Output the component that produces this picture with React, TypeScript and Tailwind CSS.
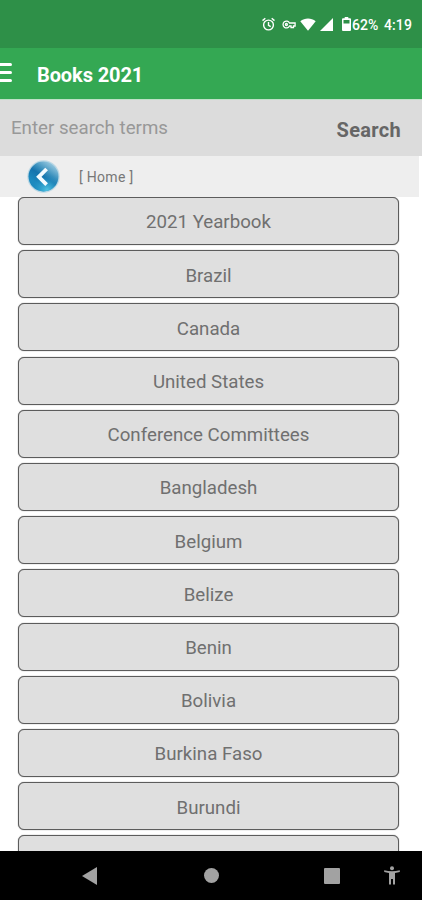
import type { ReactNode } from "react";

const entries = [
  "2021 Yearbook",
  "Brazil",
  "Canada",
  "United States",
  "Conference Committees",
  "Bangladesh",
  "Belgium",
  "Belize",
  "Benin",
  "Bolivia",
  "Burkina Faso",
  "Burundi",
  "",
];

function StatusBar() {
  return (
    <div className="flex h-12 shrink-0 items-center bg-[#2e9048] pl-[262px] text-white">
      <svg className="h-[15px] w-[13px] shrink-0" viewBox="0 0 13 15" fill="none" stroke="currentColor" strokeWidth="1.4">
        <circle cx="6.5" cy="8" r="4.9" />
        <path d="M6.5 5v3.3l2.2 1.3M.5 3.6l2.8-2.4M12.5 3.6L9.7 1.2" />
      </svg>
      <svg className="ml-[7px] h-[9px] w-[14px] shrink-0" viewBox="0 0 14 9" fill="none" stroke="currentColor" strokeWidth="1.3">
        <path d="M7.5 3A3.4 3.4 0 1 0 7.5 6H9v1.5h2.5V6h1.6V3z" />
        <circle cx="4.4" cy="4.5" r="1" />
      </svg>
      <svg className="ml-[4px] h-[13px] w-[16px] shrink-0" viewBox="0 0 16 13" fill="currentColor">
        <path d="M.3 3.2C4.8-.5 11.2-.5 15.7 3.2L8 12.8z" />
      </svg>
      <svg className="ml-[4px] h-[13px] w-[13px] shrink-0" viewBox="0 0 13 13" fill="currentColor">
        <path d="M0 13L13 0v13z" />
      </svg>
      <svg className="ml-[9px] h-[14px] w-[9px] shrink-0" viewBox="0 0 9 14" fill="currentColor">
        <path fillRule="evenodd" d="M2.7 0h3.6v1.2H8q1 0 1 1V13q0 1-1 1H1q-1 0-1-1V2.2q0-1 1-1h1.7zM1.5 3v3.5h6V3z" />
      </svg>
      <span className="ml-px w-[28px] shrink-0 pt-[2px] text-[14px] font-medium whitespace-nowrap">62%</span>
      <span className="ml-[4px] shrink-0 pt-[2px] text-[14px] font-medium tracking-[0.1px] whitespace-nowrap">4:19</span>
    </div>
  );
}

function Header() {
  return (
    <header className="flex h-[51px] shrink-0 items-center bg-[#34a853] pt-[2px] text-white">
      <div className="-mt-[5px] flex w-[12px] flex-col gap-[5px]">
        <span className="h-[3px] rounded-r-sm bg-white" />
        <span className="h-[3px] rounded-r-sm bg-white" />
        <span className="h-[3px] rounded-r-sm bg-white" />
      </div>
      <h1 className="ml-[25px] pt-px text-[20px] font-bold tracking-[-0.1px]">Books 2021</h1>
    </header>
  );
}

function BackIcon() {
  return (
    <svg className="size-[33px]" viewBox="0 0 33 33">
      <defs>
        <linearGradient id="orb" x1="0.8" y1="0" x2="0.3" y2="0.75">
          <stop offset="0" stopColor="#a9d3e6" />
          <stop offset="0.45" stopColor="#3b91be" />
          <stop offset="0.65" stopColor="#1573ad" />
          <stop offset="1" stopColor="#1c8abf" />
        </linearGradient>
        <radialGradient id="glow" cx="0.62" cy="0.95" r="0.5">
          <stop offset="0" stopColor="#4fc2e2" />
          <stop offset="1" stopColor="#269bc9" stopOpacity="0" />
        </radialGradient>
      </defs>
      <circle cx="16.5" cy="16.5" r="16.2" fill="#bcd8e5" />
      <circle cx="16.5" cy="16.5" r="15" fill="url(#orb)" />
      <circle cx="16.5" cy="16.5" r="15" fill="url(#glow)" />
      <path d="M19.6 9l-7.8 7.8 7.8 7.8" fill="none" stroke="#f3fbff" strokeWidth="3.8" />
    </svg>
  );
}

function ListButton({ children }: { children: ReactNode }) {
  return (
    <button className="flex h-12 w-full shrink-0 items-center justify-center rounded-[6px] border border-[#5c5c5c] bg-[#dfdfdf] pt-[3px] text-[18.7px] text-[#707070] shadow-[0_0_1px_#616161]">
      {children}
    </button>
  );
}

function NavigationBar() {
  return (
    <nav className="flex h-[49px] shrink-0 items-center bg-black text-[#a2a2a2]">
      <svg className="ml-[82px] h-[18px] w-[15px]" viewBox="0 0 15 18" fill="currentColor">
        <path d="M0 9L15 0v18z" />
      </svg>
      <span className="ml-[107px] size-[15px] rounded-full bg-[#a2a2a2]" />
      <span className="ml-[105px] size-[16px] rounded-[1px] bg-[#a2a2a2]" />
      <svg className="ml-[44px] h-[19px] w-[16px]" viewBox="0 0 16 19" fill="currentColor">
        <circle cx="8" cy="2.2" r="2" />
        <path d="M.2 4.2Q8 6.4 15.8 4.2V6Q13.5 6.7 11 7v11.5H9V13H7v5.5H5V7Q2.5 6.7.2 6z" />
      </svg>
    </nav>
  );
}

export default function App() {
  return (
    <div className="flex h-[900px] w-[422px] flex-col overflow-hidden bg-white font-['Roboto',sans-serif]">
      <StatusBar />
      <Header />
      <div className="flex h-[57px] shrink-0 items-center justify-between border-t border-[#bfe0c7] bg-[#dcdcdc] pr-[21px] pl-[11px]">
        <span className="pt-px text-[18.7px] text-[#989898]">Enter search terms</span>
        <button className="pt-[4px] text-[20px] font-bold tracking-[0.3px] text-[#666666]">Search</button>
      </div>
      <div className="flex h-[41px] w-[419px] shrink-0 items-center bg-[#eeeeee] pl-[27px]">
        <BackIcon />
        <span className="ml-[19px] pt-[2px] text-[14px] tracking-[0.3px] text-[#777777]">[ Home ]</span>
      </div>
      <main className="flex min-h-0 flex-1 flex-col gap-[5.2px] overflow-hidden pr-[23px] pl-[18px]">
        {entries.map((entry, index) => (
          <ListButton key={index}>{entry}</ListButton>
        ))}
      </main>
      <NavigationBar />
    </div>
  );
}
